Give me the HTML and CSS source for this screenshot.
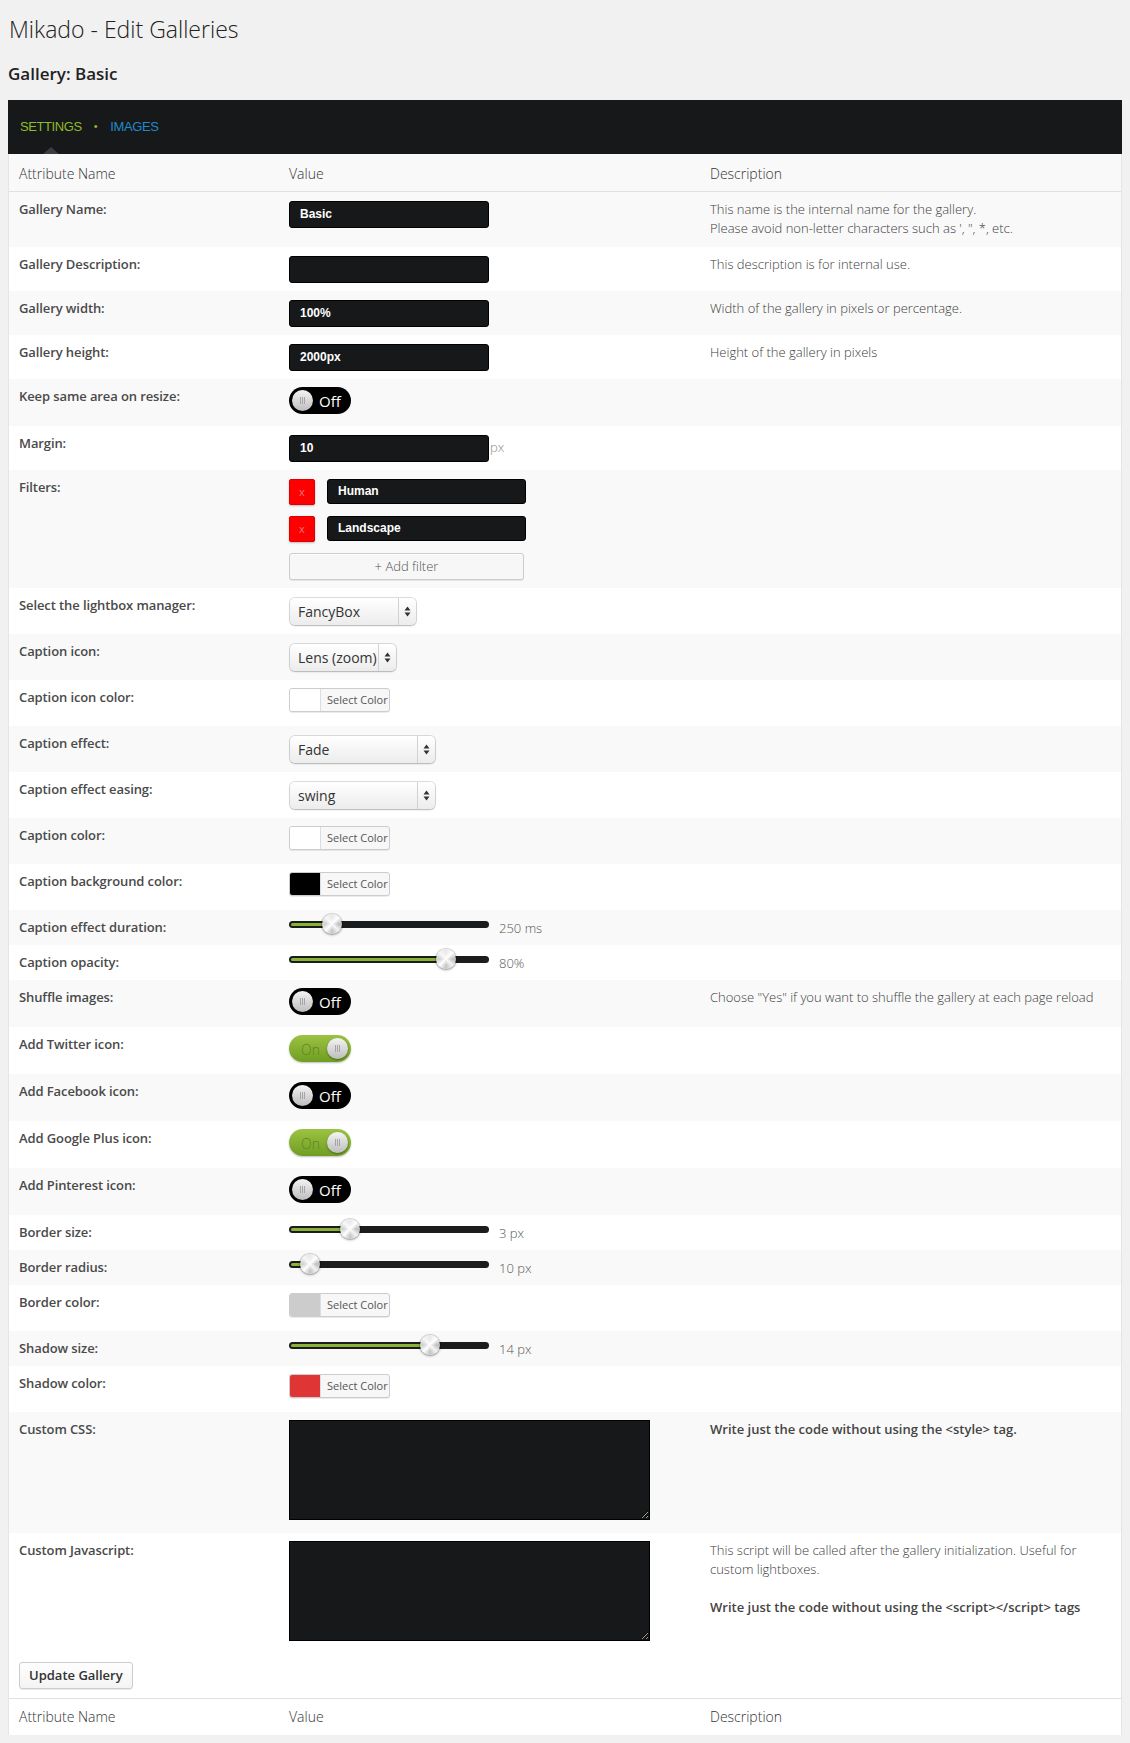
FILE: index.html
```html
<!DOCTYPE html>
<html lang="en">
<head>
<meta charset="utf-8">
<title>Mikado - Edit Galleries</title>
<link rel="stylesheet" href="styles.css">
</head>
<body>
<h1 class="page-title">Mikado - Edit Galleries</h1>
<h2 class="gallery-title">Gallery: Basic</h2>

<div class="panel">
  <div class="tabs">
    <span class="tab tab-active">SETTINGS</span>
    <span class="tab-dot">&bull;</span>
    <span class="tab tab-link">IMAGES</span>
    <span class="tab-arrow"></span>
  </div>

  <table class="settings">
    <colgroup><col class="c1"><col class="c2"><col class="c3"></colgroup>
    <thead>
      <tr><th>Attribute Name</th><th>Value</th><th>Description</th></tr>
    </thead>
    <tbody>
      <tr>
        <td class="label">Gallery Name:</td>
        <td><div class="txt">Basic</div></td>
        <td class="desc">This name is the internal name for the gallery.<br>Please avoid non-letter characters such as ', ", *, etc.</td>
      </tr>
      <tr>
        <td class="label">Gallery Description:</td>
        <td><div class="txt"></div></td>
        <td class="desc">This description is for internal use.</td>
      </tr>
      <tr>
        <td class="label">Gallery width:</td>
        <td><div class="txt">100%</div></td>
        <td class="desc">Width of the gallery in pixels or percentage.</td>
      </tr>
      <tr>
        <td class="label">Gallery height:</td>
        <td><div class="txt">2000px</div></td>
        <td class="desc">Height of the gallery in pixels</td>
      </tr>
      <tr>
        <td class="label">Keep same area on resize:</td>
        <td><div class="toggle"><span class="toggle-knob"></span><span class="toggle-text">Off</span></div></td>
        <td class="desc"></td>
      </tr>
      <tr>
        <td class="label">Margin:</td>
        <td><div class="inline"><div class="txt">10</div><span class="unit">px</span></div></td>
        <td class="desc"></td>
      </tr>
      <tr>
        <td class="label">Filters:</td>
        <td>
          <div class="filter"><span class="filter-x">x</span><div class="txt txt-filter">Human</div></div>
          <div class="filter"><span class="filter-x">x</span><div class="txt txt-filter">Landscape</div></div>
          <div class="btn-add">+ Add filter</div>
        </td>
        <td class="desc"></td>
      </tr>
      <tr>
        <td class="label">Select the lightbox manager:</td>
        <td><div class="sel sel-fancy"><span class="sel-val">FancyBox</span><span class="sel-arr"><svg width="7" height="11" viewBox="0 0 7 11"><path d="M3.5 0.5 L6.5 4.5 L0.5 4.5 Z M3.5 10.5 L6.5 6.5 L0.5 6.5 Z" fill="#333"/></svg></span></div></td>
        <td class="desc"></td>
      </tr>
      <tr>
        <td class="label">Caption icon:</td>
        <td><div class="sel sel-lens"><span class="sel-val">Lens (zoom)</span><span class="sel-arr"><svg width="7" height="11" viewBox="0 0 7 11"><path d="M3.5 0.5 L6.5 4.5 L0.5 4.5 Z M3.5 10.5 L6.5 6.5 L0.5 6.5 Z" fill="#333"/></svg></span></div></td>
        <td class="desc"></td>
      </tr>
      <tr>
        <td class="label">Caption icon color:</td>
        <td><div class="cp"><span class="cp-sw sw-white"></span><span class="cp-text">Select Color</span></div></td>
        <td class="desc"></td>
      </tr>
      <tr>
        <td class="label">Caption effect:</td>
        <td><div class="sel sel-wide"><span class="sel-val">Fade</span><span class="sel-arr"><svg width="7" height="11" viewBox="0 0 7 11"><path d="M3.5 0.5 L6.5 4.5 L0.5 4.5 Z M3.5 10.5 L6.5 6.5 L0.5 6.5 Z" fill="#333"/></svg></span></div></td>
        <td class="desc"></td>
      </tr>
      <tr>
        <td class="label">Caption effect easing:</td>
        <td><div class="sel sel-wide"><span class="sel-val">swing</span><span class="sel-arr"><svg width="7" height="11" viewBox="0 0 7 11"><path d="M3.5 0.5 L6.5 4.5 L0.5 4.5 Z M3.5 10.5 L6.5 6.5 L0.5 6.5 Z" fill="#333"/></svg></span></div></td>
        <td class="desc"></td>
      </tr>
      <tr>
        <td class="label">Caption color:</td>
        <td><div class="cp"><span class="cp-sw sw-white"></span><span class="cp-text">Select Color</span></div></td>
        <td class="desc"></td>
      </tr>
      <tr>
        <td class="label">Caption background color:</td>
        <td><div class="cp"><span class="cp-sw sw-black"></span><span class="cp-text">Select Color</span></div></td>
        <td class="desc"></td>
      </tr>
      <tr>
        <td class="label">Caption effect duration:</td>
        <td><div class="slider-wrap"><div class="slider"><span class="track"></span><span class="fill" style="width:41px"></span><span class="knob" style="left:43px"></span></div><span class="slider-val">250 ms</span></div></td>
        <td class="desc"></td>
      </tr>
      <tr>
        <td class="label">Caption opacity:</td>
        <td><div class="slider-wrap"><div class="slider"><span class="track"></span><span class="fill" style="width:155px"></span><span class="knob" style="left:157px"></span></div><span class="slider-val">80%</span></div></td>
        <td class="desc"></td>
      </tr>
      <tr>
        <td class="label">Shuffle images:</td>
        <td><div class="toggle"><span class="toggle-knob"></span><span class="toggle-text">Off</span></div></td>
        <td class="desc">Choose "Yes" if you want to shuffle the gallery at each page reload</td>
      </tr>
      <tr>
        <td class="label">Add Twitter icon:</td>
        <td><div class="toggle toggle-on"><span class="toggle-text">On</span><span class="toggle-knob"></span></div></td>
        <td class="desc"></td>
      </tr>
      <tr>
        <td class="label">Add Facebook icon:</td>
        <td><div class="toggle"><span class="toggle-knob"></span><span class="toggle-text">Off</span></div></td>
        <td class="desc"></td>
      </tr>
      <tr>
        <td class="label">Add Google Plus icon:</td>
        <td><div class="toggle toggle-on"><span class="toggle-text">On</span><span class="toggle-knob"></span></div></td>
        <td class="desc"></td>
      </tr>
      <tr>
        <td class="label">Add Pinterest icon:</td>
        <td><div class="toggle"><span class="toggle-knob"></span><span class="toggle-text">Off</span></div></td>
        <td class="desc"></td>
      </tr>
      <tr>
        <td class="label">Border size:</td>
        <td><div class="slider-wrap"><div class="slider"><span class="track"></span><span class="fill" style="width:59px"></span><span class="knob" style="left:61px"></span></div><span class="slider-val">3 px</span></div></td>
        <td class="desc"></td>
      </tr>
      <tr>
        <td class="label">Border radius:</td>
        <td><div class="slider-wrap"><div class="slider"><span class="track"></span><span class="fill" style="width:19px"></span><span class="knob" style="left:21px"></span></div><span class="slider-val">10 px</span></div></td>
        <td class="desc"></td>
      </tr>
      <tr>
        <td class="label">Border color:</td>
        <td><div class="cp"><span class="cp-sw sw-gray"></span><span class="cp-text">Select Color</span></div></td>
        <td class="desc"></td>
      </tr>
      <tr>
        <td class="label">Shadow size:</td>
        <td><div class="slider-wrap"><div class="slider"><span class="track"></span><span class="fill" style="width:139px"></span><span class="knob" style="left:141px"></span></div><span class="slider-val">14 px</span></div></td>
        <td class="desc"></td>
      </tr>
      <tr>
        <td class="label">Shadow color:</td>
        <td><div class="cp"><span class="cp-sw sw-red"></span><span class="cp-text">Select Color</span></div></td>
        <td class="desc"></td>
      </tr>
      <tr>
        <td class="label">Custom CSS:</td>
        <td><textarea class="code"></textarea></td>
        <td class="desc"><strong>Write just the code without using the &lt;style&gt; tag.</strong></td>
      </tr>
      <tr>
        <td class="label">Custom Javascript:</td>
        <td><textarea class="code"></textarea></td>
        <td class="desc">This script will be called after the gallery initialization. Useful for custom lightboxes.<p class="desc-p"><strong>Write just the code without using the &lt;script&gt;&lt;/script&gt; tags</strong></p></td>
      </tr>
    </tbody>
  </table>

  <div class="actions"><button class="btn" type="button">Update Gallery</button></div>

  <table class="settings settings-foot">
    <colgroup><col class="c1"><col class="c2"><col class="c3"></colgroup>
    <tfoot>
      <tr><th>Attribute Name</th><th>Value</th><th>Description</th></tr>
    </tfoot>
  </table>
</div>
</body>
</html>
```

FILE: styles.css
```css
html, body {
  background: #f1f1f1;
}
body {
  margin: 8px;
  font-family: "Open Sans", "Liberation Sans", sans-serif;
  color: #444;
}

.page-title {
  margin: 7px 0 0 1px;
  font-size: 23px;
  font-weight: 300;
  line-height: 29px;
  color: #222;
}
.gallery-title {
  margin: 18px 0 14px 0;
  font-size: 17px;
  font-weight: 600;
  line-height: 24px;
  color: #222;
}

.panel {
  background: #fff;
  border: 1px solid #e5e5e5;
  border-top: 0;
  border-bottom: 0;
}

.tabs {
  position: relative;
  display: flex;
  align-items: center;
  height: 54px;
  padding-left: 12px;
  margin: 0 -1px;
  background: #17181a;
  font-family: "Liberation Sans", Arial, sans-serif;
  font-size: 13px;
  letter-spacing: -0.4px;
}
.tab { padding-bottom: 2px; }
.tab-active { color: #8fba2c; }
.tab-link { color: #1e8ac9; }
.tab-dot {
  color: #8fba2c;
  font-size: 11px;
  margin: 0 13px 0 12px;
  padding-bottom: 2px;
}
.tab-arrow {
  position: absolute;
  left: 35px;
  bottom: 0;
  width: 0;
  height: 0;
  border-left: 8px solid transparent;
  border-right: 8px solid transparent;
  border-bottom: 7px solid #3c3d40;
}

.settings {
  width: 100%;
  border-collapse: collapse;
  table-layout: fixed;
}
.c1 { width: 270px; }
.c2 { width: 421px; }

.settings th {
  text-align: left;
  font-size: 14px;
  font-weight: 300;
  line-height: 18px;
  color: #333;
  padding: 11px 10px 8px;
  background: #f9f9f9;
  border-bottom: 1px solid #e1e1e1;
}
.settings-foot th {
  background: #fff;
  border-bottom: 0;
  border-top: 1px solid #e1e1e1;
  padding: 9px 10px 9px;
}

.settings tbody tr:nth-child(odd) { background: #f9f9f9; }
.settings tbody tr:nth-child(even) { background: #fff; }

.settings td {
  vertical-align: top;
  padding: 9px 10px 8px;
  font-size: 13px;
  line-height: 18px;
}
.settings td.label {
  font-weight: 600;
  color: #4a4a4a;
  letter-spacing: -0.1px;
  padding-top: 8px;
  padding-bottom: 9px;
}
.settings td.desc {
  font-weight: 300;
  color: #3d3d3d;
  line-height: 19px;
  padding-top: 8px;
  padding-bottom: 9px;
}
.desc strong {
  font-weight: 600;
  color: #444;
}
.desc-p { margin: 19px 0 0; }

/* text inputs */
.txt {
  box-sizing: border-box;
  width: 200px;
  height: 27px;
  padding: 0 10px;
  background: #17181a;
  border: 1px solid #000;
  border-radius: 3px;
  color: #fff;
  font-family: "Liberation Sans", Arial, sans-serif;
  font-weight: bold;
  font-size: 12px;
  line-height: 25px;
}
.inline {
  display: flex;
  align-items: center;
}
.unit {
  margin-left: 1px;
  margin-top: -3px;
  color: #888;
  font-weight: 300;
}

/* filters */
.filter {
  display: flex;
  gap: 12px;
  margin-bottom: 11px;
}
.filter-x {
  box-sizing: border-box;
  width: 26px;
  height: 26px;
  background: #ff0000;
  border: 1px solid #e00000;
  border-radius: 2px;
  box-shadow: 0 1px 2px rgba(0,0,0,.25);
  color: #e87a7a;
  font-size: 11px;
  line-height: 24px;
  text-align: center;
}
.txt-filter {
  width: 199px;
  height: 25px;
  line-height: 23px;
}
.btn-add {
  box-sizing: border-box;
  width: 235px;
  height: 27px;
  background: #f7f7f7;
  border: 1px solid #ccc;
  border-radius: 3px;
  box-shadow: 0 1px 0 #fff inset, 0 1px 0 rgba(0,0,0,.08);
  color: #555;
  font-weight: 300;
  text-align: center;
  line-height: 25px;
}

/* selects */
.sel {
  box-sizing: border-box;
  display: flex;
  height: 27px;
  margin: 1px 0 1px 1px;
  border-radius: 5px;
  background: linear-gradient(#ffffff, #ececec);
  box-shadow: 0 0 0 1px rgba(0,0,0,.13), 0 1px 2px rgba(0,0,0,.18);
}
.sel-fancy { width: 126px; }
.sel-lens { width: 106px; }
.sel-wide { width: 145px; }
.sel-val {
  flex: 1;
  padding-left: 8px;
  font-size: 14px;
  line-height: 27px;
  color: #333;
  white-space: nowrap;
}
.sel-arr {
  width: 17px;
  border-left: 1px solid #d2d2d2;
  display: flex;
  align-items: center;
  justify-content: center;
}

/* color pickers */
.cp {
  box-sizing: border-box;
  display: flex;
  width: 101px;
  height: 24px;
  margin: -1px 0 6px 0;
  background: #f7f7f7;
  border: 1px solid #ccc;
  border-radius: 3px;
  box-shadow: 0 1px 0 rgba(0,0,0,.08);
  overflow: hidden;
}
.cp-sw {
  width: 30px;
  border-right: 1px solid #ddd;
}
.sw-white { background: #fff; }
.sw-black { background: #000; }
.sw-gray { background: #cccccc; }
.sw-red { background: #e03535; }
.cp-text {
  padding-left: 6px;
  font-size: 11px;
  line-height: 22px;
  color: #555;
  white-space: nowrap;
}

/* sliders */
.slider-wrap {
  display: flex;
  align-items: center;
  gap: 10px;
}
.slider {
  position: relative;
  width: 200px;
  height: 18px;
}
.track {
  position: absolute;
  left: 0;
  right: 0;
  top: 2px;
  height: 7px;
  background: #1b1c1e;
  border-radius: 4px;
}
.fill {
  position: absolute;
  left: 2px;
  top: 4px;
  height: 3px;
  background: #8ab236;
  border-radius: 2px;
}
.knob {
  position: absolute;
  top: -5px;
  width: 20px;
  height: 20px;
  margin-left: -10px;
  border-radius: 50%;
  background:
    radial-gradient(circle at 50% 50%, rgba(255,255,255,.9) 0, rgba(255,255,255,0) 45%),
    conic-gradient(#e8e8e8, #ffffff, #bdbdbd, #f3f3f3, #c4c4c4, #ffffff, #d0d0d0, #f6f6f6, #e8e8e8);
  box-shadow: 0 0 0 1px rgba(0,0,0,.12), 0 1px 3px rgba(0,0,0,.35);
}
.slider-val {
  color: #555;
  font-weight: 300;
  white-space: nowrap;
}

/* toggles */
.toggle {
  position: relative;
  display: flex;
  align-items: center;
  width: 62px;
  height: 27px;
  margin: -1px 0 4px;
  border-radius: 14px;
  background: #000;
  box-sizing: border-box;
}
.toggle-knob {
  position: absolute;
  left: 3px;
  top: 3px;
  width: 21px;
  height: 21px;
  border-radius: 50%;
  background: linear-gradient(#f4f4f4, #bdbdbd);
  box-shadow: 0 1px 2px rgba(0,0,0,.4);
}
.toggle-knob::after {
  content: "";
  position: absolute;
  left: 8px;
  top: 7px;
  width: 5px;
  height: 7px;
  background: repeating-linear-gradient(90deg, #a5a5a5 0 1px, transparent 1px 2px);
}
.toggle-text {
  margin-left: 30px;
  color: #fff;
  font-size: 15px;
  line-height: 27px;
  padding-top: 2px;
}
.toggle-on {
  background: linear-gradient(#9cc343, #6f9d22);
  box-shadow: 0 1px 2px rgba(0,0,0,.25);
}
.toggle-on .toggle-knob {
  left: 38px;
}
.toggle-on .toggle-text {
  margin-left: 12px;
  color: #5f8420;
  font-weight: 300;
  font-size: 14px;
}

/* textareas */
.code {
  display: block;
  box-sizing: border-box;
  width: 361px;
  height: 100px;
  margin: -1px 0 5px 0;
  background: #17181a;
  border: 1px solid #000;
  border-radius: 0;
  color: #fff;
  resize: both;
}

/* actions */
.actions {
  padding: 8px 10px 9px;
}
.btn {
  display: block;
  box-sizing: border-box;
  height: 27px;
  padding: 0 9px;
  background: linear-gradient(#fefefe, #f4f4f4);
  border: 1px solid #ccc;
  border-radius: 3px;
  box-shadow: 0 1px 0 rgba(0,0,0,.08);
  font-family: "Open Sans", sans-serif;
  font-size: 13px;
  font-weight: 600;
  color: #333;
  line-height: 25px;
}
```
